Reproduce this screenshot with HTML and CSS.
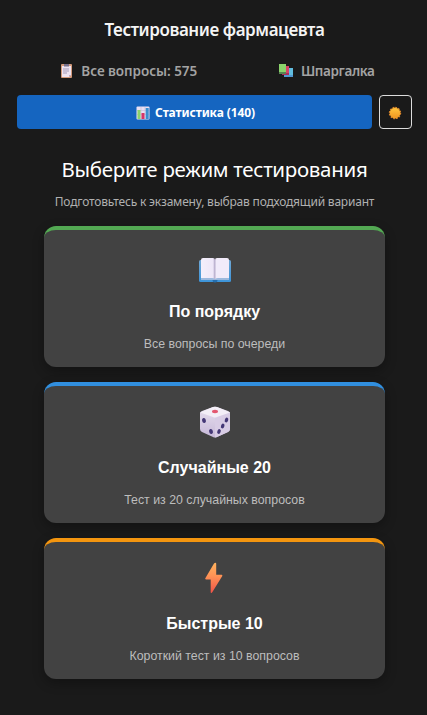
FILE: index.html
```html
<!DOCTYPE html>
<html lang="ru">
<head>
<meta charset="utf-8">
<title>Тестирование фармацевта</title>
<link rel="stylesheet" href="styles.css">
</head>
<body>
<header class="header">
  <h1 class="title">Тестирование фармацевта</h1>
  <nav class="tabs">
    <a class="tab tab-all">
      <svg width="13" height="16" viewBox="0 0 13 16"><rect x="1" y="1" width="11" height="14" rx="1" fill="#d39a7b"/><path d="M2 3h9v9l-2 2H2z" fill="#eee4f2"/><path d="M4 1h5v2.5H4z" fill="#77708b"/><path d="M3 6h6M3 8h6M3 10h4" stroke="#a49bb9"/><path d="M9 14v-2h2z" fill="#bcaacb"/></svg>
      <span class="label-all">Все вопросы: 575</span>
    </a>
    <a class="tab tab-notes">
      <svg width="16" height="16" viewBox="0 0 16 16"><path d="M6 5h9v9H6z" fill="#5299d3"/><path d="M11 5h4v7h-4z" fill="#61bde0"/><path d="M4 3h7v9H4z" fill="#a82e5b"/><path d="M8 3h3v7H8z" fill="#d94468"/><path d="M1 1h7v10H1z" fill="#568452"/><path d="M1 1h7v8H1z" fill="#8bd36b"/></svg>
      <span class="label-notes">Шпаргалка</span>
    </a>
  </nav>
  <div class="actions">
    <button class="stats">
      <svg width="14" height="14" viewBox="0 0 14 14"><rect x=".5" y=".5" width="13" height="13" rx="1" fill="#e9e0f2"/><path d="M1 4.5h12M1 8.5h12M5 1v12M9 1v12" stroke="#c4bbd8" stroke-width=".6"/><path d="M1.5 4h3v9h-3z" fill="#8bd36b"/><path d="M5.5 7h3v6h-3z" fill="#d63568"/><path d="M9.7 2h3v11h-3z" fill="#398fd0"/></svg>
      <span class="label-stats">Статистика (140)</span>
    </button>
    <button class="theme" aria-label="Тема">
      <svg width="14" height="14" viewBox="0 0 14 14"><defs><linearGradient id="sun" x2="0" y2="1"><stop stop-color="#ffc43d"/><stop offset="1" stop-color="#ef9722"/></linearGradient></defs><circle cx="7" cy="7" r="5.4" fill="#f4a72b"/><circle cx="7" cy="7" r="5.6" fill="none" stroke="#dc872c" stroke-width="1.2" stroke-dasharray="1.7 1.2"/><circle cx="7" cy="7" r="4.8" fill="url(#sun)"/></svg>
    </button>
  </div>
</header>
<main class="modes">
  <h2 class="heading">Выберите режим тестирования</h2>
  <p class="intro">Подготовьтесь к экзамену, выбрав подходящий вариант</p>
  <section class="card green">
    <svg class="icon" width="34" height="34" viewBox="0 -5 34 34"><defs><linearGradient id="cover" x2="0" y2="1"><stop stop-color="#71a8d5"/><stop offset="1" stop-color="#3d94d9"/></linearGradient><linearGradient id="page"><stop stop-color="#f4effb"/><stop offset=".85" stop-color="#eee7f8"/><stop offset="1" stop-color="#b8aecd"/></linearGradient></defs><rect x="1" y="6" width="32" height="22" rx="1.5" fill="url(#cover)"/><path d="M3 24h28v2H19l-2 1-2-1H3z" fill="#9cb9de"/><path d="M3 6q0-2 2-2h10q2 0 2 2v19q-1-1-3-1H3z" fill="url(#page)"/><path d="M17 6q0-2 2-2h10q2 0 2 2v18H20q-2 0-3 1z" fill="#f1ebfa"/><path d="M17 5v20" stroke="#b9afcc"/><path d="M14.500 26h5q0 2.500-2.500 2.500T14.500 26z" fill="#256eae"/></svg>
    <h3 class="name">По порядку</h3>
    <p class="desc">Все вопросы по очереди</p>
  </section>
  <section class="card blue">
    <svg class="icon" width="34" height="34" viewBox="0 0 34 34"><defs><linearGradient id="left" x2="0" y2="1"><stop stop-color="#e8e0ef"/><stop offset="1" stop-color="#c6b8d8"/></linearGradient></defs><path d="M2 8q0-1 2-2l11-4q2-.7 4 0l11 4q2 1 2 2v16q0 2-2 3l-11 5q-2 1-4 0L4 27q-2-1-2-3z" fill="url(#left)"/><path d="M17 12l15-5v17q0 2-2 3l-11 5-2 .5z" fill="#d8cce5"/><path d="M2 7.500 15 2q2-.7 4 0l13 5.500L19 12q-2 1-4 0z" fill="#f3eef7"/><ellipse cx="17" cy="6.500" rx="3" ry="1.700" fill="#e35770"/><g fill="#443776"><ellipse cx="6" cy="15.500" rx="1.900" ry="2.500" transform="rotate(-15 6 15.500)"/><ellipse cx="13" cy="26.500" rx="1.900" ry="2.600" transform="rotate(-15 13 26.500)"/><ellipse cx="28.500" cy="15" rx="1.700" ry="2.500" transform="rotate(20 28.500 15)"/><ellipse cx="24.700" cy="21" rx="1.700" ry="2.500" transform="rotate(20 24.700 21)"/><ellipse cx="21" cy="26.500" rx="1.700" ry="2.500" transform="rotate(20 21 26.500)"/></g></svg>
    <h3 class="name">Случайные 20</h3>
    <p class="desc">Тест из 20 случайных вопросов</p>
  </section>
  <section class="card orange">
    <svg class="icon" width="34" height="34" viewBox="0 0 34 34"><defs><linearGradient id="bolt" x1=".4" y1="0" x2=".4" y2="1"><stop stop-color="#ffb35e"/><stop offset=".45" stop-color="#ff9155"/><stop offset="1" stop-color="#f05348"/></linearGradient></defs><path d="M16 2.500q.7-.8 1.500-.8.700 0 .7 1v11h5.500q1 .2.600 1.200L14.400 31q-.5.900-1.200.9-.6-.1-.5-1V18.500H8q-1.200-.2-.7-1.300z" fill="url(#bolt)"/></svg>
    <h3 class="name">Быстрые 10</h3>
    <p class="desc">Короткий тест из 10 вопросов</p>
  </section>
</main>
</body>
</html>
```

FILE: styles.css
```css
* { box-sizing: border-box; }
body { margin: 0; height: 715px; overflow: hidden; background: #1a1a1a; color: #fff; font-family: "Noto Sans", sans-serif; }
h1, h2, h3, p { margin: 0; white-space: nowrap; }
svg { display: block; flex: none; }
.header { padding: 18px 15px 0 17px; }
.title { height: 24px; display: flex; justify-content: center; font-size: 17px; line-height: 24px; font-weight: 600; letter-spacing: -.43px; color: #f4f4f4; }
.tabs { height: 53px; display: grid; grid-template-columns: 1fr 1fr; margin: 0 -13px 0 13px; }
.tab { display: flex; align-items: center; justify-content: center; gap: 8px; padding-top: 4px; font-size: 13.5px; font-weight: 600; color: #a3a3a3; white-space: nowrap; }
.tab-notes { gap: 7px; }
.label-all { letter-spacing: -.05px; }
.label-notes { letter-spacing: -.35px; }
.actions { display: flex; gap: 7px; height: 34px; }
button { margin: 0; padding: 0; display: flex; align-items: center; justify-content: center; }
.stats { flex: 1; gap: 5px; padding: 2px 0 0 2px; border: 0; border-radius: 4px; background: #1565c0; color: #fff; font: 700 12px/16px "Noto Sans", sans-serif; letter-spacing: -.1px; }
.theme { width: 33px; padding-right: 2px; padding-top: 1px; border: 1px solid #ddd; border-radius: 4px; background: transparent; }
.modes { width: 341px; margin: 25px 0 0 44px; display: flex; flex-direction: column; align-items: center; }
.heading { height: 30px; font-size: 20.5px; line-height: 30px; font-weight: 400; letter-spacing: -.3px; }
.intro { height: 20px; margin-top: 8px; font-size: 12px; line-height: 20px; letter-spacing: -.2px; color: #b0b0b0; }
.card { width: 341px; height: 141px; margin-bottom: 15px; padding-top: 19px; display: flex; flex-direction: column; align-items: center; border-top: 4px solid; border-radius: 12px; background: #424242; box-shadow: 0 4px 12px rgba(0,0,0,.3); font-family: "Liberation Sans", sans-serif; }
.intro + .card { margin-top: 14px; }
.green { border-color: #53a953; }
.blue { border-color: #318fdf; }
.orange { border-color: #f3950f; }
.name { margin-top: 19px; font-size: 16px; line-height: 20px; font-weight: 700; color: #fff; }
.desc { margin-top: 14px; font-size: 12.35px; line-height: 16px; color: #bdbdbd; }
```
